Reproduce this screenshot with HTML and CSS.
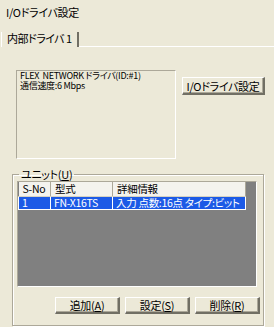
FILE: index.html
```html
<!DOCTYPE html>
<html lang="ja">
<head>
    <meta charset="UTF-8">
    <title>I/Oドライバ設定</title>
    <link rel="stylesheet" href="styles.css">
</head>
<body>
    <div class="title">I/Oドライバ設定</div>

    <div class="tabs">
        <div class="tab">内部ドライバ 1</div>
        <div class="tab-rest"></div>
    </div>

    <div class="panel">
        <div class="top-row">
            <div class="info">
                <div>FLEX&nbsp; NETWORK ドライバ(ID:#1)</div>
                <div>通信速度:6 Mbps</div>
            </div>
            <button class="btn btn-wide">I/Oドライバ設定</button>
        </div>

        <fieldset class="group">
            <legend>ユニット(<u>U</u>)</legend>
            <div class="list">
                <table>
                    <thead>
                        <tr>
                            <th class="c1">S-No</th>
                            <th class="c2">型式</th>
                            <th class="c3">詳細情報</th>
                        </tr>
                    </thead>
                    <tbody>
                        <tr class="selected">
                            <td>1</td>
                            <td>FN-X16TS</td>
                            <td>入力 点数:16点 タイプ:ビット</td>
                        </tr>
                    </tbody>
                </table>
            </div>
            <div class="actions">
                <button class="btn">追加(<u>A</u>)</button>
                <button class="btn">設定(<u>S</u>)</button>
                <button class="btn">削除(<u>R</u>)</button>
            </div>
        </fieldset>
    </div>
</body>
</html>
```

FILE: styles.css
```css
body {
    margin: 0;
    width: 274px;
    height: 327px;
    overflow: hidden;
    background-color: #ece9d8;
    font-family: "Noto Sans CJK JP", "Liberation Sans", sans-serif;
    font-size: 11px;
    font-feature-settings: "palt";
    letter-spacing: -0.3px;
    color: #000;
}
.title {
    padding: 5px 0 0 6px;
    height: 29px;
    box-sizing: border-box;
    line-height: 14px;
}
.tabs {
    display: flex;
    align-items: flex-end;
    height: 18px;
}
.tab {
    margin-left: 1px;
    height: 15px;
    box-sizing: border-box;
    padding: 0 5px 0 5px;
    line-height: 13px;
    white-space: nowrap;
    letter-spacing: -0.5px;
    border-left: 1px solid #fff;
    border-right: 2px solid #716f64;
}
.tab-rest {
    flex: 1;
    border-bottom: 1px solid #fff;
}
.panel {
    padding: 22px 0 0 12px;
}
.top-row {
    display: flex;
    align-items: flex-start;
}
.info {
    margin: 1px 0 0 4px;
    width: 160px;
    height: 89px;
    box-sizing: border-box;
    padding: 0 3px;
    line-height: 10px;
    font-size: 9px;
    white-space: nowrap;
    border-top: 1px solid #aca899;
    border-left: 1px solid #aca899;
    border-right: 1px solid #fff;
    border-bottom: 1px solid #fff;
}
.btn {
    font-family: inherit;
    font-size: 11px;
    font-feature-settings: "palt";
    letter-spacing: -0.3px;
    color: #000;
    background-color: #ece9d8;
    padding: 0;
    height: 18px;
    line-height: 14px;
    border-top: 1px solid #fff;
    border-left: 1px solid #fff;
    border-right: 2px solid #716f64;
    border-bottom: 2px solid #716f64;
    box-shadow: inset -1px -1px #aca899;
}
.btn-wide {
    margin: 8px 0 0 6px;
    width: 83px;
}
.group {
    margin: 10px 0 0 0;
    width: 252px;
    height: 157px;
    box-sizing: border-box;
    padding: 0 0 0 4px;
    border: 1px solid #aca899;
    box-shadow: inset 1px 1px #fff, 1px 1px #fff;
}
.group legend {
    padding: 0 2px;
    margin-left: 2px;
    line-height: 11px;
}
.list {
    width: 240px;
    height: 106px;
    margin-top: 1px;
    box-sizing: border-box;
    background-color: #808080;
    border-top: 1px solid #aca899;
    border-left: 1px solid #aca899;
    border-right: 1px solid #fff;
    border-bottom: 1px solid #fff;
}
table {
    border-collapse: collapse;
    font-size: 10.5px;
}
th {
    height: 14px;
    padding: 0 0 0 4px;
    text-align: left;
    font-weight: normal;
    background-color: #f4f3ee;
    border-right: 1px solid #aca899;
    border-bottom: 1px solid #d6d2c2;
    line-height: 13px;
    box-sizing: border-box;
}
.c1 { width: 32px; }
.c2 { width: 62px; }
.c3 { width: 133px; }
td {
    height: 12px;
    padding: 0 0 0 3px;
    line-height: 11px;
    white-space: nowrap;
}
.selected td {
    background-color: #1c5ae6;
    color: #fff;
    border: 1px solid #fff;
    border-top: none;
}
.actions {
    display: flex;
    gap: 5px;
    margin: 10px 0 0 38px;
}
.actions .btn {
    width: 65px;
    height: 17px;
}
```
